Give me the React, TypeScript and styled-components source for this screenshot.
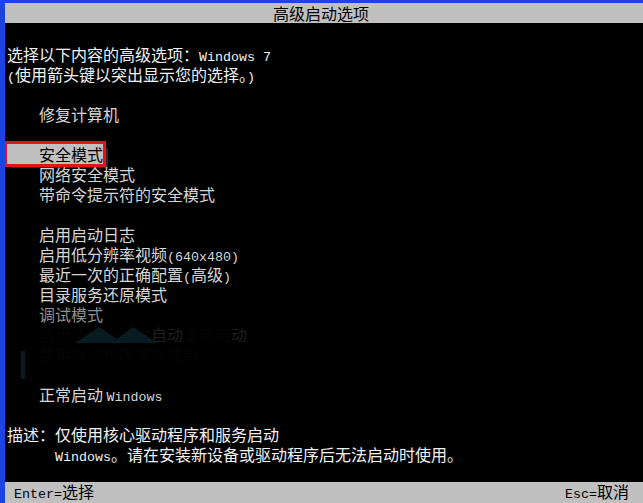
import styled, { createGlobalStyle } from 'styled-components';

const GlobalStyle = createGlobalStyle`
  html, body {
    margin: 0;
    padding: 0;
    background: #000;
  }
  body {
    font-family: "Noto Sans CJK SC", "DejaVu Sans", sans-serif;
  }
`;

type Tone = 'bright' | 'option' | 'dim' | 'ghost';

const toneColors: Record<Tone, string> = {
  bright: '#f2f2f2',
  option: '#d6d6d6',
  dim: '#8e8e8e',
  ghost: '#040404',
};

const Screen = styled.div`
  position: relative;
  width: 638px;
  height: 500px;
  display: flex;
  flex-direction: column;
  background: #000;
  border-left: 5px solid #1c44e4;
  border-top: 3px solid #1c44e4;
  overflow: hidden;
`;

const Bar = styled.div<{ $align: 'center' | 'split' }>`
  display: flex;
  align-items: center;
  justify-content: ${(p) => (p.$align === 'center' ? 'center' : 'space-between')};
  height: ${(p) => (p.$align === 'center' ? '20px' : '21px')};
  padding: ${(p) => (p.$align === 'center' ? '0 6px 0 0' : '0 14px 0 9px')};
  background: #c0c0c0;
  color: #000;
  font-size: 16px;
  line-height: 20px;
  white-space: pre;
`;

const Body = styled.div`
  flex: 1;
  display: flex;
  flex-direction: column;
  padding: 21px 0 0 2px;
`;

const Line = styled.div<{ $tone?: Tone; $indent?: number }>`
  height: 20px;
  line-height: 20px;
  font-size: 16px;
  white-space: pre;
  padding-left: ${(p) => (p.$indent ?? 0) * 8}px;
  color: ${(p) => toneColors[p.$tone ?? 'bright']};
`;

const Ascii = styled.span`
  font-family: "Liberation Mono", "DejaVu Sans Mono", monospace;
  font-size: 13.33px;
`;

const Selected = styled.span`
  display: inline-block;
  height: 20px;
  padding-left: 32px;
  background: #c0c0c0;
  color: #000;
  outline: 3px solid #e0141c;
  outline-offset: 0px;
  box-shadow: 5px 4px 0 #2c2c2c;
`;

const Faint = styled.span`
  color: #1c1c1c;
`;

const Watermark = styled.svg`
  position: absolute;
  left: 10px;
  top: 318px;
  pointer-events: none;
`;

const Blank = () => <Line />;

export default function App() {
  return (
    <>
      <GlobalStyle />
      <Screen>
        <Bar $align="center">高级启动选项</Bar>
        <Body>
          <Line>
            选择以下内容的高级选项：<Ascii>Windows 7</Ascii>
          </Line>
          <Line>
            <Ascii>(</Ascii>使用箭头键以突出显示您的选择。<Ascii>)</Ascii>
          </Line>
          <Blank />
          <Line $tone="option" $indent={4}>修复计算机</Line>
          <Blank />
          <Line>
            <Selected>安全模式</Selected>
          </Line>
          <Line $tone="option" $indent={4}>网络安全模式</Line>
          <Line $tone="option" $indent={4}>带命令提示符的安全模式</Line>
          <Blank />
          <Line $tone="option" $indent={4}>启用启动日志</Line>
          <Line $tone="option" $indent={4}>
            启用低分辨率视频<Ascii>(640x480)</Ascii>
          </Line>
          <Line $tone="option" $indent={4}>
            最近一次的正确配置<Ascii>(</Ascii>高级<Ascii>)</Ascii>
          </Line>
          <Line $tone="option" $indent={4}>目录服务还原模式</Line>
          <Line $tone="dim" $indent={4}>调试模式</Line>
          <Line $tone="ghost" $indent={4}>
            禁用系统失败时<Faint>自动</Faint>重新启<Faint>动</Faint>
          </Line>
          <Line $tone="ghost" $indent={4}>禁用驱动程序签名强制</Line>
          <Blank />
          <Line $tone="option" $indent={4}>
            正常启动 <Ascii>Windows</Ascii>
          </Line>
          <Blank />
          <Line>描述：仅使用核心驱动程序和服务启动</Line>
          <Line $indent={6}>
            <Ascii>Windows</Ascii>。请在安装新设备或驱动程序后无法启动时使用。
          </Line>
        </Body>
        <Bar $align="split">
          <span>
            <Ascii>Enter=</Ascii>选择
          </span>
          <span>
            <Ascii>Esc=</Ascii>取消
          </span>
        </Bar>
        <Watermark width="240" height="60" viewBox="0 0 240 60">
          <path d="M60 22 L84 6 L102 18 L118 6 L142 22 Z" fill="#0a2229" opacity="0.8" />
          <rect x="6" y="30" width="4" height="28" fill="#0a1c22" />
        </Watermark>
      </Screen>
    </>
  );
}
